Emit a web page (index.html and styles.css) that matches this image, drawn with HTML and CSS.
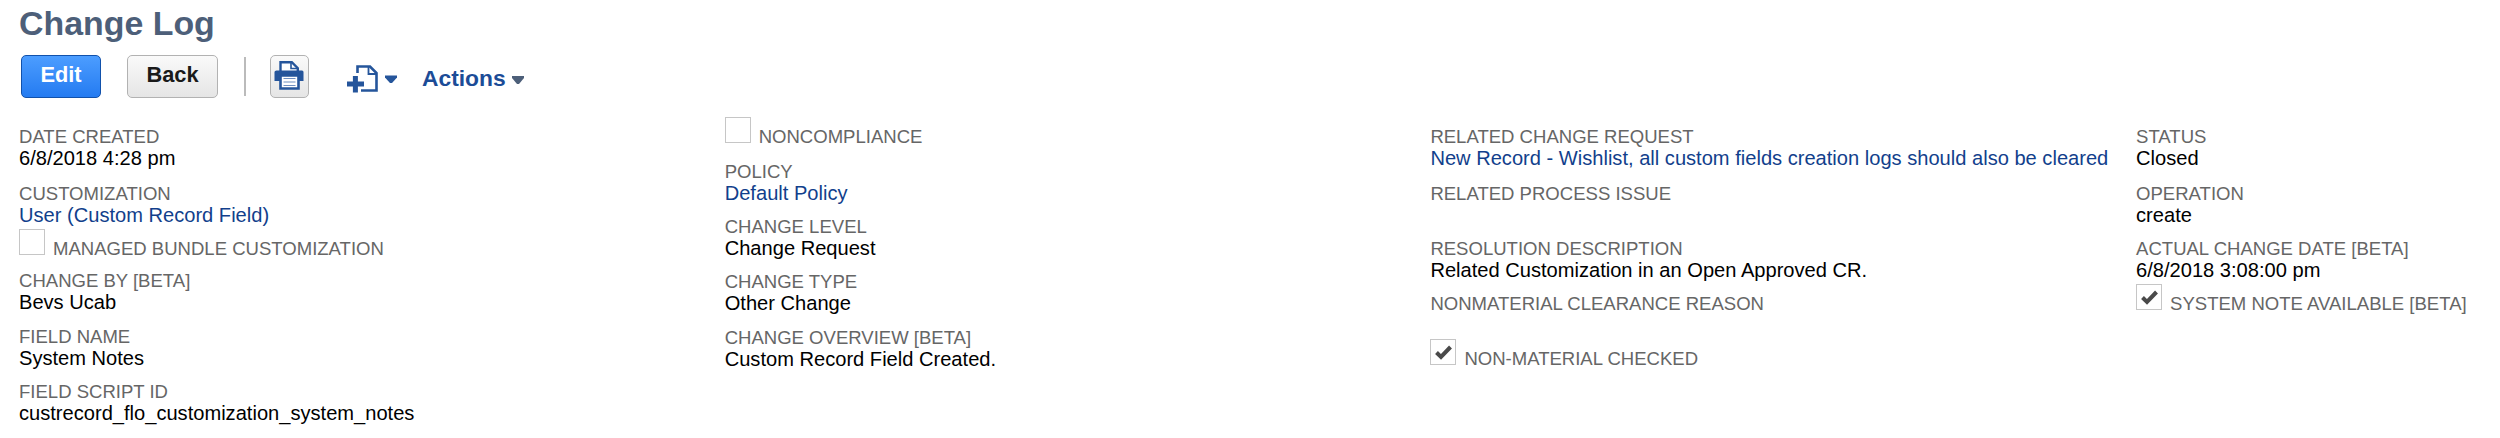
FILE: index.html
```html
<!DOCTYPE html>
<html lang="en">
<head>
<meta charset="utf-8">
<title>Change Log</title>
<link rel="stylesheet" href="styles.css">
</head>
<body>
<main class="page">
  <h1 class="title">Change Log</h1>
  <div class="toolbar">
    <button class="btn btn-primary">Edit</button>
    <button class="btn btn-back">Back</button>
    <span class="divider"></span>
    <button class="btn btn-print" aria-label="Print">
      <svg width="31" height="31" viewBox="0 0 31 31">
        <path d="M6.500 12V2.200h11.300l6 6V12" fill="#fff" stroke="#25559b" stroke-width="2.400"/>
        <path d="M17 2v6.500h7" fill="none" stroke="#25559b" stroke-width="1.600"/>
        <path d="M2.500 10.500h25.500q1.500 0 1.500 1.500v9h-29v-9q0-1.500 2-1.500z" fill="#25559b"/>
        <path d="M6.500 15.500h18v13h-18z" fill="#fff" stroke="#25559b" stroke-width="2.600"/>
        <path d="M9.500 18.500h12M9.500 22h12M9.500 25.500h12" stroke="#6f8fc0" stroke-width="1.200"/>
      </svg>
    </button>
    <span class="new-menu">
      <svg width="50" height="30" viewBox="0 0 50 30">
        <path d="M10.500 9V2.500H23l6.500 6.500v17.500H14" fill="none" stroke="#25559b" stroke-width="2.600"/>
        <path d="M21.500 2.500v7.500h8" fill="none" stroke="#25559b" stroke-width="1.800"/>
        <path d="M8.400 12v16.500M0 20h17" stroke="#25559b" stroke-width="5"/>
        <path d="M38 11.500h12v2l-5 5.500h-2l-5-5.500z" fill="#25559b"/>
      </svg>
    </span>
    <span class="actions">Actions
      <svg width="12" height="8" viewBox="0 0 12 8"><path d="M0 0h12v2L7 8H5L0 2z" fill="#4d5f79"/></svg>
    </span>
  </div>
  <section class="columns">
    <div class="column">
      <div class="field field-first"><div class="label">DATE CREATED</div><div class="value">6/8/2018 4:28 pm</div></div>
      <div class="field"><div class="label">CUSTOMIZATION</div><a class="value link">User (Custom Record Field)</a></div>
      <div class="check check-short"><span class="box"></span><span class="label">MANAGED BUNDLE CUSTOMIZATION</span></div>
      <div class="field"><div class="label">CHANGE BY [BETA]</div><div class="value">Bevs Ucab</div></div>
      <div class="field"><div class="label">FIELD NAME</div><div class="value">System Notes</div></div>
      <div class="field"><div class="label">FIELD SCRIPT ID</div><div class="value">custrecord_flo_customization_system_notes</div></div>
    </div>
    <div class="column">
      <div class="check"><span class="box"></span><span class="label">NONCOMPLIANCE</span></div>
      <div class="field"><div class="label">POLICY</div><a class="value link">Default Policy</a></div>
      <div class="field"><div class="label">CHANGE LEVEL</div><div class="value">Change Request</div></div>
      <div class="field"><div class="label">CHANGE TYPE</div><div class="value">Other Change</div></div>
      <div class="field"><div class="label">CHANGE OVERVIEW [BETA]</div><div class="value">Custom Record Field Created.</div></div>
    </div>
    <div class="column">
      <div class="field field-first"><div class="label">RELATED CHANGE REQUEST</div><a class="value link">New Record - Wishlist, all custom fields creation logs should also be cleared</a></div>
      <div class="field"><div class="label">RELATED PROCESS ISSUE</div></div>
      <div class="field"><div class="label">RESOLUTION DESCRIPTION</div><div class="value">Related Customization in an Open Approved CR.</div></div>
      <div class="field"><div class="label">NONMATERIAL CLEARANCE REASON</div></div>
      <div class="check"><span class="box"><svg width="17" height="15" viewBox="0 0 17 15"><path d="M1.500 7.500l4.500 4.500L15.500 2" fill="none" stroke="#4a4a4a" stroke-width="4"/></svg></span><span class="label">NON-MATERIAL CHECKED</span></div>
    </div>
    <div class="column">
      <div class="field field-first"><div class="label">STATUS</div><div class="value">Closed</div></div>
      <div class="field"><div class="label">OPERATION</div><div class="value">create</div></div>
      <div class="field"><div class="label">ACTUAL CHANGE DATE [BETA]</div><div class="value">6/8/2018 3:08:00 pm</div></div>
      <div class="check"><span class="box"><svg width="17" height="15" viewBox="0 0 17 15"><path d="M1.500 7.500l4.500 4.500L15.500 2" fill="none" stroke="#4a4a4a" stroke-width="4"/></svg></span><span class="label">SYSTEM NOTE AVAILABLE [BETA]</span></div>
    </div>
  </section>
</main>
</body>
</html>
```
FILE: styles.css
```css
* { box-sizing: border-box; }
body {
  margin: 0;
  background: #fff;
  color: #000;
  font-family: "Liberation Sans", Arial, sans-serif;
}
.page { height: 438px; overflow: hidden; padding-left: 19px; }
.title {
  margin: 0;
  padding-top: 4px;
  height: 55px;
  font-size: 33.9px;
  line-height: 38px;
  color: #4d5f79;
}
.toolbar { display: flex; height: 70px; align-items: flex-start; padding-left: 2px; }
.btn {
  height: 43px;
  padding: 0 0 3px;
  border: 1.5px solid #b2b2b2;
  border-radius: 5px;
  background: linear-gradient(#fafafa, #e5e5e5);
  font: bold 21.8px/36px "Liberation Sans", Arial, sans-serif;
  color: #1a1a1a;
}
.btn-primary {
  width: 80px;
  border-color: #1151ab;
  background: linear-gradient(#4c9dff, #247bf1);
  color: #fff;
}
.btn-back { width: 91px; margin-left: 26px; }
.divider { width: 2px; height: 39px; margin: 2px 24px 0 26px; background: #bbb; }
.btn-print { display: flex; width: 39px; align-items: center; justify-content: center; }
.btn-print svg { flex: none; }
.new-menu { height: 30px; margin: 9px 0 0 38px; }
.actions {
  margin: 10px 0 0 25px;
  font-size: 22.8px;
  font-weight: bold;
  line-height: 26px;
  color: #1c4c97;
}
.actions svg { margin-bottom: 2px; }
.columns { display: grid; grid-template-columns: repeat(4, 705.7px); }
.field { height: 55.2px; }
.field-first { height: 56.8px; }
.label { display: block; font-size: 18.55px; line-height: 24px; color: #666; white-space: nowrap; }
.value { display: block; margin-top: -2px; font-size: 20.1px; line-height: 22px; white-space: nowrap; }
.link { color: #123f8c; }
.check { display: flex; height: 44px; margin-top: -9px; }
.check-short { height: 41.5px; }
.check .label { margin: 9px 0 0 8px; }
.box {
  display: flex;
  width: 26px;
  height: 26px;
  align-items: center;
  justify-content: center;
  margin-top: 1px;
  border: 1.5px solid #c6c6c6;
}
```
